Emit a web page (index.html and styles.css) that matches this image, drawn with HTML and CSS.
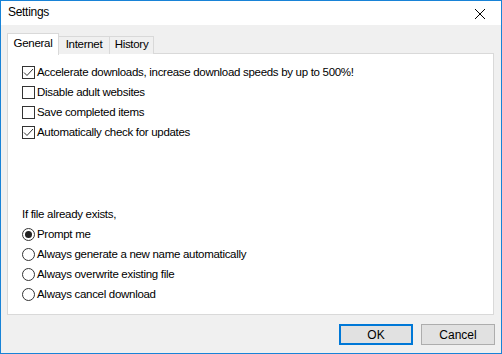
FILE: index.html
```html
<!DOCTYPE html>
<html lang="en">
<head>
    <meta charset="UTF-8">
    <title>Settings</title>
    <link rel="stylesheet" href="styles.css">
</head>
<body>
<div class="window">
    <div class="titlebar">
        <span class="title">Settings</span>
        <svg class="close" width="12" height="12" viewBox="0 0 12 12">
            <path d="M1 1 L11 11 M11 1 L1 11" stroke="#000" stroke-width="1"/>
        </svg>
    </div>

    <div class="content">
        <!-- pestañas -->
        <div class="tabs">
            <div class="tab active">General</div>
            <div class="tab internet">Internet</div>
            <div class="tab history">History</div>
        </div>

        <div class="panel">
            <div class="row"><span class="check on"><svg width="11" height="11" viewBox="0 0 11 11"><path d="M1 5.5 L4 8.5 L10 2" fill="none" stroke="#333" stroke-width="1"/></svg></span>Accelerate downloads, increase download speeds by up to 500%!</div>
            <div class="row"><span class="check"></span>Disable adult websites</div>
            <div class="row"><span class="check"></span>Save completed items</div>
            <div class="row"><span class="check on"><svg width="11" height="11" viewBox="0 0 11 11"><path d="M1 5.5 L4 8.5 L10 2" fill="none" stroke="#333" stroke-width="1"/></svg></span>Automatically check for updates</div>

            <div class="group">
                <div class="row label">If file already exists,</div>
                <div class="row"><span class="radio on"></span>Prompt me</div>
                <div class="row"><span class="radio"></span>Always generate a new name automatically</div>
                <div class="row"><span class="radio"></span>Always overwrite existing file</div>
                <div class="row"><span class="radio"></span>Always cancel download</div>
            </div>
        </div>

        <div class="buttons">
            <button class="btn default">OK</button>
            <button class="btn">Cancel</button>
        </div>
    </div>
</div>
</body>
</html>
```

FILE: styles.css
```css
body {
    margin: 0;
    font-family: "Segoe UI", "Liberation Sans", sans-serif;
    font-size: 11.5px;
    letter-spacing: -0.3px;
    color: #000;
}
.window {
    width: 502px;
    height: 354px;
    box-sizing: border-box;
    border: 1px solid #1883d7;
    background-color: #f0f0f0;
    display: flex;
    flex-direction: column;
}
.titlebar {
    height: 24px;
    background-color: #fff;
    display: flex;
    align-items: center;
    justify-content: space-between;
    padding: 0 15px 0 7px;
    font-size: 12px;
}
.title {
    margin-top: -2px;
}
.close {
    margin-top: 1px;
}
.content {
    padding: 0 7px 0 6px;
    display: flex;
    flex-direction: column;
}
.tabs {
    display: flex;
    align-items: flex-end;
    height: 21px;
    margin-top: 8px;
    position: relative;
    z-index: 1;
}
.tab {
    height: 18px;
    box-sizing: border-box;
    border: 1px solid #d9d9d9;
    border-bottom: none;
    border-left: none;
    background-color: #f0f0f0;
    padding-top: 1px;
    text-align: center;
}
.tab.active {
    width: 52px;
    background-color: #fff;
    border-left: 1px solid #d9d9d9;
    padding-top: 3px;
    margin-bottom: -1px;
    height: 22px;
}
.tab.internet {
    width: 51px;
}
.tab.history {
    width: 44px;
}
.panel {
    height: 262px;
    box-sizing: border-box;
    margin-top: -1px;
    border: 1px solid #d9d9d9;
    background-color: #fff;
    padding: 8px 14px 0 14px;
}
.row {
    height: 20px;
    display: flex;
    align-items: center;
}
.group {
    margin-top: 62px;
}
.check, .radio {
    width: 13px;
    height: 13px;
    box-sizing: border-box;
    border: 1px solid #333;
    background-color: #fff;
    margin-right: 2px;
    display: flex;
    align-items: center;
    justify-content: center;
}
.radio {
    border-radius: 50%;
}
.radio.on::after {
    content: "";
    width: 7px;
    height: 7px;
    border-radius: 50%;
    background-color: #222;
}
.buttons {
    display: flex;
    justify-content: flex-end;
    gap: 8px;
    margin-top: 9px;
    margin-right: -1px;
}
.btn {
    width: 74px;
    height: 21px;
    font-family: inherit;
    font-size: 12px;
    letter-spacing: 0;
    background-color: #e1e1e1;
    border: 1px solid #adadad;
    padding: 0;
}
.btn.default {
    border: 2px solid #0078d7;
}
```
